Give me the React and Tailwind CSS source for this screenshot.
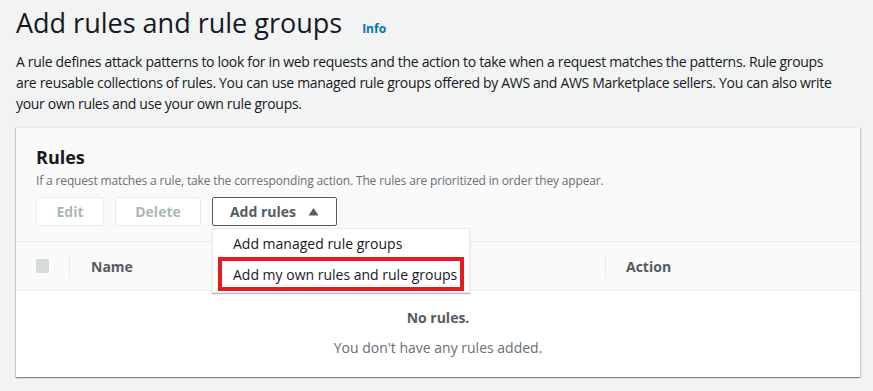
export default function App() {
  const font = { fontFamily: '"Open Sans", "Noto Sans", Arial, sans-serif' };
  return (
    <div
      className="w-[873px] h-[391px] overflow-hidden bg-[#f2f3f3] px-4 text-[#16191f]"
      style={font}
    >
      <div className="flex items-baseline pt-[3px]">
        <h1 className="text-[27px] leading-[40px] font-normal text-[#16191f]">
          Add rules and rule groups
        </h1>
        <span className="ml-[20px] text-[12px] font-bold text-[#0073bb]">Info</span>
      </div>
      <p className="mt-[8px] pr-[16px] text-[14px] tracking-[-0.32px] leading-[21px] text-[#16191f]">
        A rule defines attack patterns to look for in web requests and the action to take when a
        request matches the patterns. Rule groups are reusable collections of rules. You can use
        managed rule groups offered by AWS and AWS Marketplace sellers. You can also write your own
        rules and use your own rule groups.
      </p>

      <div className="mt-[13px] w-[844px] h-[250px] bg-[#fafafa] border-t border-[#eaeded] shadow-[0_1px_1px_0_rgba(0,28,36,0.3),1px_1px_1px_0_rgba(0,28,36,0.15),-1px_1px_1px_0_rgba(0,28,36,0.15)] flex flex-col">
        <div className="px-5 pt-[16px]">
          <h2 className="text-[18px] leading-[26px] font-bold text-[#16191f]">Rules</h2>
          <p className="mt-[3px] text-[12px] tracking-[-0.15px] leading-[16px] text-[#687078]">
            If a request matches a rule, take the corresponding action. The rules are prioritized in
            order they appear.
          </p>
          <div className="mt-[8px] flex gap-[11px]">
            <button className="w-[68px] h-[29px] border border-[#eaeded] bg-white text-[14px] font-bold text-[#aab7b8] rounded-[2px]">
              Edit
            </button>
            <button className="w-[86px] h-[29px] border border-[#eaeded] bg-white text-[14px] font-bold text-[#aab7b8] rounded-[2px]">
              Delete
            </button>
            <div className="relative">
              <button className="w-[125px] h-[29px] border border-[#545b64] bg-white text-[14px] font-bold text-[#545b64] rounded-[2px] flex items-center justify-center gap-[12px]">
                <span>Add rules</span>
                <svg width="11" height="9" viewBox="0 0 11 9">
                  <path d="M5.5 1 L10.5 8.5 L0.5 8.5 Z" fill="#545b64" />
                </svg>
              </button>
              <div className="absolute left-0 top-[31px] z-10 w-[258px] bg-white border border-[#eaeded] shadow-[0_1px_1px_0_rgba(0,28,36,0.3)] text-[14px] text-[#16191f]">
                <div className="h-[28px] flex items-center pl-[20px]">Add managed rule groups</div>
                <div className="mx-[5px] mb-[1px] h-[34px] border-[4px] border-[#e41b23] flex items-center pl-[11px]">
                  Add my own rules and rule groups
                </div>
              </div>
            </div>
          </div>
        </div>
        <div className="mt-[15px] h-[50px] border-t border-b border-[#eaeded] flex items-center text-[14px] font-bold text-[#545b64]">
          <div className="w-[54px] flex items-center">
            <div className="ml-[20px] w-[14px] h-[14px] rounded-[2px] bg-[#d5dbdb]" />
            <div className="ml-[20px] w-px h-[24px] bg-[#eaeded]" />
          </div>
          <div className="ml-[21px] w-[514px]">Name</div>
          <div className="w-px h-[24px] bg-[#eaeded]" />
          <div className="ml-[20px]">Action</div>
        </div>
        <div className="flex-1 bg-white flex flex-col items-center pt-[17px]">
          <div className="text-[14px] font-bold text-[#545b64] leading-[20px]">No rules.</div>
          <div className="mt-[10px] text-[14px] text-[#687078] leading-[20px]">
            You don't have any rules added.
          </div>
        </div>
      </div>
    </div>
  );
}
